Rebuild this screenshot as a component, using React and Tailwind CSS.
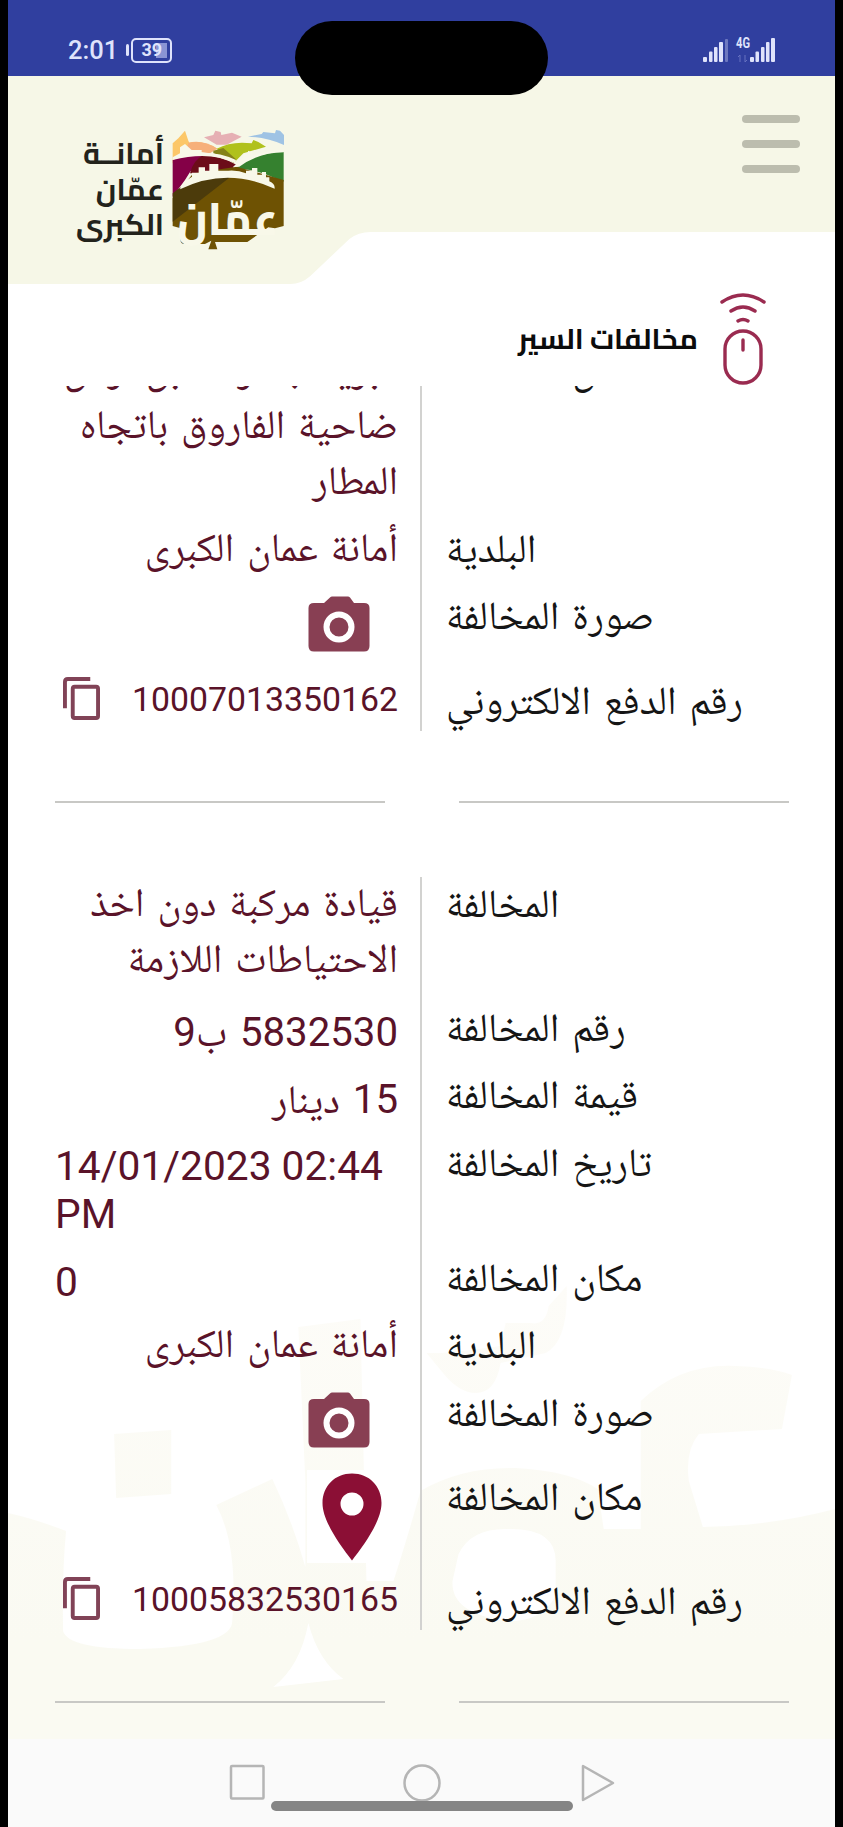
import React from "react";

const naskh = "font-['Roboto','Noto_Naskh_Arabic',sans-serif] [word-spacing:3px]";
const kufi = "font-['Cairo','Noto_Kufi_Arabic',sans-serif]";

function StatusBar() {
  return (
    <div className="flex h-[76px] shrink-0 items-start justify-between bg-[#303f9f] pl-[60px] pr-[59px] font-['Roboto',sans-serif] text-[#dfe3fb]">
      <div className="flex items-center pt-[37px]">
        <span className="text-[25.5px] font-medium leading-[26px]">2:01</span>
        <span className="ml-[8px] h-[12px] w-[3px] rounded-sm bg-[#dfe3fb]" />
        <span className="ml-[2px] flex h-[25px] w-[41px] items-center justify-center rounded-[5px] border-2 border-[#dfe3fb] p-[3px]">
          <span className="flex h-full w-full items-center justify-center bg-linear-to-r from-transparent from-65% to-[#8a94d4] to-65% text-[18px] font-bold leading-none">39</span>
        </span>
      </div>
      <svg className="mt-[35px] h-[28px] w-[74px]" viewBox="0 -2 74 28">
        <g fill="#dfe3fb">
          <rect x="1" y="20" width="4" height="5" rx="1" />
          <rect x="7" y="14.500" width="3.500" height="10.500" rx="1" />
          <rect x="12" y="10" width="3.500" height="15" rx="1" />
          <rect x="17" y="5" width="4" height="20" rx="1" />
          <rect x="23" y="2" width="3" height="23" rx="1" opacity=".35" />
          <rect x="48" y="20" width="4" height="5" rx="1" />
          <rect x="53.500" y="14.500" width="3.500" height="10.500" rx="1" />
          <rect x="59" y="10" width="3.500" height="15" rx="1" />
          <rect x="64" y="5" width="3.500" height="20" rx="1" />
          <rect x="69" y="1" width="4" height="24" rx="1" />
          <text x="34" y="11" fontSize="14" fontWeight="700" fontFamily="Roboto" textLength="14" lengthAdjust="spacingAndGlyphs">4G</text>
        </g>
        <path d="M36 20l2-2v7M43 18v7l2-2" stroke="#6672c0" fill="none" />
      </svg>
    </div>
  );
}

function CityEmblem() {
  return (
    <svg className="h-[140px] w-[140px]" viewBox="0 0 420 420">
      <path d="M38 70L55 55L75 32L85 62L88 68Q130 60 172 86L120 96L38 130Z" fill="#fcc768" />
      <path d="M85 68Q130 58 172 86L150 100L80 90Z" fill="#f6b07a" />
      <path d="M132 52L160 45L166 32L182 36L184 45L216 38L245 50L200 74L170 74Z" fill="#e6b0b4" />
      <path d="M264 50L305 42L310 36L345 40L348 30L360 32L372 45V75Q320 52 264 50Z" fill="#9fc3e4" />
      <path d="M170 86Q215 62 275 70L280 60L295 66L318 80L250 100L225 125L190 104Z" fill="#b0c11c" />
      <path d="M160 92L190 84L228 118L222 130Q190 108 160 100Z" fill="#84821b" />
      <path d="M225 145Q290 96 371 96V185L310 160L270 150Z" fill="#35812f" />
      <path d="M38 120Q90 96 150 110Q100 130 75 180L38 230Z" fill="#840047" />
      <path d="M130 106Q190 110 232 136L220 160H90Q100 120 130 106Z" fill="#6c0c19" />
      <path d="M38 235L100 160L230 140L371 180V318L345 325L325 322L262 366L165 366L172 388H145L154 362L135 372H70Q55 368 62 325L38 318Z" fill="#6e5203" />
      <path d="M38 220Q100 165 210 172L38 305Z" fill="#4c3b0b" />
      <path d="M38 112L60 100V82L75 72L95 90H125V98Q185 98 228 120L225 130Q150 92 38 120Z" fill="#f8f8e9" />
      <path d="M218 142L250 112V102H264V92L278 98V106Q320 92 371 90V97Q295 98 238 140Z" fill="#f8f8e9" />
      <path d="M60 208Q62 190 96 170V158H116V142H135V152H148V132H175V152H205Q235 150 258 160V152H276V144H292V164H306V156H318V172H328V184Q345 190 344 206Q200 140 60 208Z" fill="#f8f8e9" />
      <text x="203" y="345" fill="#f8f8e9" fontSize="136" fontWeight="800" textAnchor="middle" direction="rtl" textLength="304" lengthAdjust="spacingAndGlyphs" fontFamily="Cairo, Noto Kufi Arabic, sans-serif">عمّان</text>
    </svg>
  );
}

function Header() {
  return (
    <header className="relative h-[310px] shrink-0">
      <svg className="absolute left-0 top-0 h-[208px] w-full" viewBox="0 0 826 208" preserveAspectRatio="none">
        <path d="M0 0H826V156H362Q350 156 341 163L302 200Q293 208 282 208H0Z" fill="#f6f7e7" />
      </svg>
      <div className="relative flex justify-between">
        <div className="flex pl-[60px]">
          <div dir="rtl" className={`mt-[60px] w-[96px] text-[29.5px] font-bold leading-[35.5px] text-[#23231c] ${kufi}`}>
            <p className="whitespace-nowrap">أمانــة</p>
            <p className="whitespace-nowrap">عمّان</p>
            <p className="whitespace-nowrap">الكبرى</p>
          </div>
          <div className="-ml-[4px] mt-[44px]"><CityEmblem /></div>
        </div>
        <div className="mr-[35px] mt-[39px] flex w-[58px] flex-col gap-[17px]">
          <span className="h-2 rounded-full bg-[#bcbdae]" />
          <span className="h-2 rounded-full bg-[#bcbdae]" />
          <span className="h-2 rounded-full bg-[#bcbdae]" />
        </div>
      </div>
      <div className="relative mt-[30px] flex items-start justify-end pr-[67px]">
        <h1 dir="rtl" className={`mr-[20px] mt-[24px] whitespace-nowrap text-[28.6px] font-bold leading-[50px] text-[#0c0c0c] ${kufi}`}>مخالفات السير</h1>
        <svg className="h-[96px] w-[50px]" viewBox="0 0 50 96" fill="none" stroke="#9a2b50" strokeWidth="3.400" strokeLinecap="round">
          <path d="M4 12Q25 -2 46 12M13 21Q25 13 37 21M20 31Q25 28 30 31M25 50V60" />
          <rect x="7" y="41" width="36" height="52" rx="18" />
        </svg>
      </div>
    </header>
  );
}

function Camera() {
  return (
    <svg className="mr-[28px] h-[56px] w-[62px]" viewBox="0 0 62 56">
      <path d="M6 7H16L22 1.500Q23 .5 24 .5H40Q41 .5 42 1.500L46 7H56Q61.500 7 61.500 12V50Q61.500 55.500 56 55.500H6Q.5 55.500 .5 50V12Q.5 7 6 7Z" fill="#883f53" />
      <circle cx="31" cy="31" r="12.500" fill="none" stroke="#fff" strokeWidth="6" />
    </svg>
  );
}

function Pin() {
  return (
    <div className="mr-[1px] flex h-[93px] w-[90px] justify-center bg-white pt-[3px]">
      <svg className="h-[88px] w-[60px]" viewBox="0 0 60 88">
        <path d="M30 .5C13 .5 .5 13 .5 30C.5 48 18 72 30 87.500C42 72 59.500 48 59.500 30C59.500 13 47 .5 30 .5ZM30 19.500A11.500 11.500 0 1 1 30 42.500A11.500 11.500 0 1 1 30 19.500Z" fillRule="evenodd" fill="#8b0f35" />
      </svg>
    </div>
  );
}

function Copy() {
  return (
    <svg className="h-[43px] w-[37px]" viewBox="0 0 38 44" fill="none" stroke="#814357" strokeWidth="4" preserveAspectRatio="none">
      <path d="M2 32V5Q2 2 5 2H28" />
      <rect x="10" y="10" width="26" height="32" rx="2" />
    </svg>
  );
}

function Row({ h, label, children }) {
  return (
    <div className={`flex ${h}`}>
      <div className="flex w-[343px] shrink-0 justify-end">{children}</div>
      <div className={`-mt-[1px] ml-[48px] whitespace-nowrap text-[40px] leading-[56px] text-[#151515] ${naskh}`} dir="rtl">{label}</div>
    </div>
  );
}

function Ar({ children }) {
  return <div dir="rtl" className={`-mt-[2px] whitespace-nowrap text-[40.2px] leading-[56px] ${naskh}`}>{children}</div>;
}

function PayNumber({ value }) {
  return (
    <div className="flex w-full items-start justify-between pl-[8px]">
      <div className="mt-[3px]"><Copy /></div>
      <span className="mt-[4px] font-['Roboto',sans-serif] text-[33.8px] leading-[43px]">{value}</span>
    </div>
  );
}

function Separator() {
  return (
    <div className="flex justify-between">
      <span className="h-[2px] w-[330px] bg-[#c8c8c5]" />
      <span className="h-[2px] w-[330px] bg-[#c8c8c5]" />
    </div>
  );
}

function Watermark() {
  return (
    <svg className="absolute left-0 top-0 h-[1354px] w-full" viewBox="8 385 826 1354" preserveAspectRatio="none">
      <defs>
        <linearGradient id="fade" gradientUnits="userSpaceOnUse" x1="0" y1="1290" x2="0" y2="1640">
          <stop offset="0" stopColor="#fdfcf8" />
          <stop offset="1" stopColor="#fafaf2" />
        </linearGradient>
      </defs>
      <g fill="url(#fade)">
        <path d="M8 1512Q35 1518 66 1530Q62 1570 63 1630Q68 1648 140 1648Q232 1645 232 1620Q238 1545 216 1504L272 1478Q292 1520 305 1566V1480L298 1326L360 1318L366 1580H393Q406 1540 420 1490Q460 1466 515 1467Q570 1470 597 1488L603 1528H640V1400Q680 1362 735 1365Q770 1366 791 1374L781 1428L698 1433Q684 1450 688 1480L702 1526Q770 1525 834 1508V1739H8Z" />
        <path d="M114 1433L171 1429V1493L116 1497ZM426 1352L442 1352Q465 1350 500 1345L505 1322L530 1322Q545 1325 548 1305L566 1285Q568 1340 545 1352L500 1362Q495 1392 475 1392Q460 1392 445 1375Z" />
      </g>
      <path d="M458 1553Q470 1528 505 1528Q555 1526 555 1560V1595Q540 1622 505 1620Q450 1612 452 1580ZM308 1622Q318 1660 343 1678L273 1686Q300 1665 308 1622Z" fill="#fff" />
    </svg>
  );
}

function NavBar() {
  return (
    <div className="flex h-[88px] shrink-0 flex-col items-center bg-[#fafafa]">
      <svg className="mt-[24px] h-[40px] w-[390px]" viewBox="0 0 390 40" fill="none" stroke="#b5b5b5" strokeWidth="2.500">
        <rect x="4" y="3" width="32.500" height="32.500" rx="1" />
        <circle cx="195" cy="20" r="17.500" />
        <path d="M356 3V37L386 20Z" strokeLinejoin="round" />
      </svg>
      <span className="-mt-[2px] h-[10px] w-[302px] rounded-full bg-[#858585]" />
    </div>
  );
}

export default function App() {
  return (
    <div className="relative h-[1827px] w-[843px] overflow-hidden bg-black pl-[8px] pr-[8px]">
      <div className="flex h-full flex-col bg-white">
        <StatusBar />
        <Header />
        <main className="relative h-[1353px] shrink-0 overflow-hidden text-[#5a1329]">
          <Watermark />
          <div className="relative -mt-[43px] pl-[47px] pr-[46px]">
            <section className="relative h-[388px]">
              <span className="absolute left-[365px] top-0 h-full w-[2px] bg-[#d2d2d0]" />
              <Row h="h-[179px]" label="مكان المخالفة">
                <Ar>البريد جسر مقابل ارض<br />ضاحية الفاروق باتجاه<br />المطار</Ar>
              </Row>
              <Row h="h-[67px]" label="البلدية"><Ar>أمانة عمان الكبرى</Ar></Row>
              <Row h="h-[85px]" label="صورة المخالفة"><div className="mt-[7px]"><Camera /></div></Row>
              <Row h="h-[56px]" label="رقم الدفع الالكتروني"><PayNumber value="10007013350162" /></Row>
            </section>
            <div className="pb-[74px] pt-[70px]"><Separator /></div>
            <section className="relative h-[753px]">
              <span className="absolute left-[365px] top-0 h-full w-[2px] bg-[#d2d2d0]" />
              <Row h="h-[124px]" label="المخالفة">
                <Ar>قيادة مركبة دون اخذ<br />الاحتياطات اللازمة</Ar>
              </Row>
              <Row h="h-[67px]" label="رقم المخالفة">
                <div className="mt-[6px]"><Ar>5832530 ب9</Ar></div>
              </Row>
              <Row h="h-[68px]" label="قيمة المخالفة">
                <div className="mt-[6px]"><Ar>15 دينار</Ar></div>
              </Row>
              <Row h="h-[115px]" label="تاريخ المخالفة">
                <div className="mt-[7px] w-full font-['Roboto',sans-serif] text-[40.7px] leading-[47.700px]">14/01/2023 02:44<br />PM</div>
              </Row>
              <Row h="h-[67px]" label="مكان المخالفة">
                <div className="mt-[8px] w-full font-['Roboto',sans-serif] text-[40.7px] leading-[47.700px]">0</div>
              </Row>
              <Row h="h-[68px]" label="البلدية"><Ar>أمانة عمان الكبرى</Ar></Row>
              <Row h="h-[84px]" label="صورة المخالفة"><div className="mt-[6px]"><Camera /></div></Row>
              <Row h="h-[104px]" label="مكان المخالفة"><Pin /></Row>
              <Row h="h-[56px]" label="رقم الدفع الالكتروني"><PayNumber value="10005832530165" /></Row>
            </section>
            <div className="pt-[71px]"><Separator /></div>
          </div>
        </main>
        <NavBar />
      </div>
      <div className="absolute left-[295px] top-[21px] h-[74px] w-[253px] rounded-full bg-black" />
    </div>
  );
}
